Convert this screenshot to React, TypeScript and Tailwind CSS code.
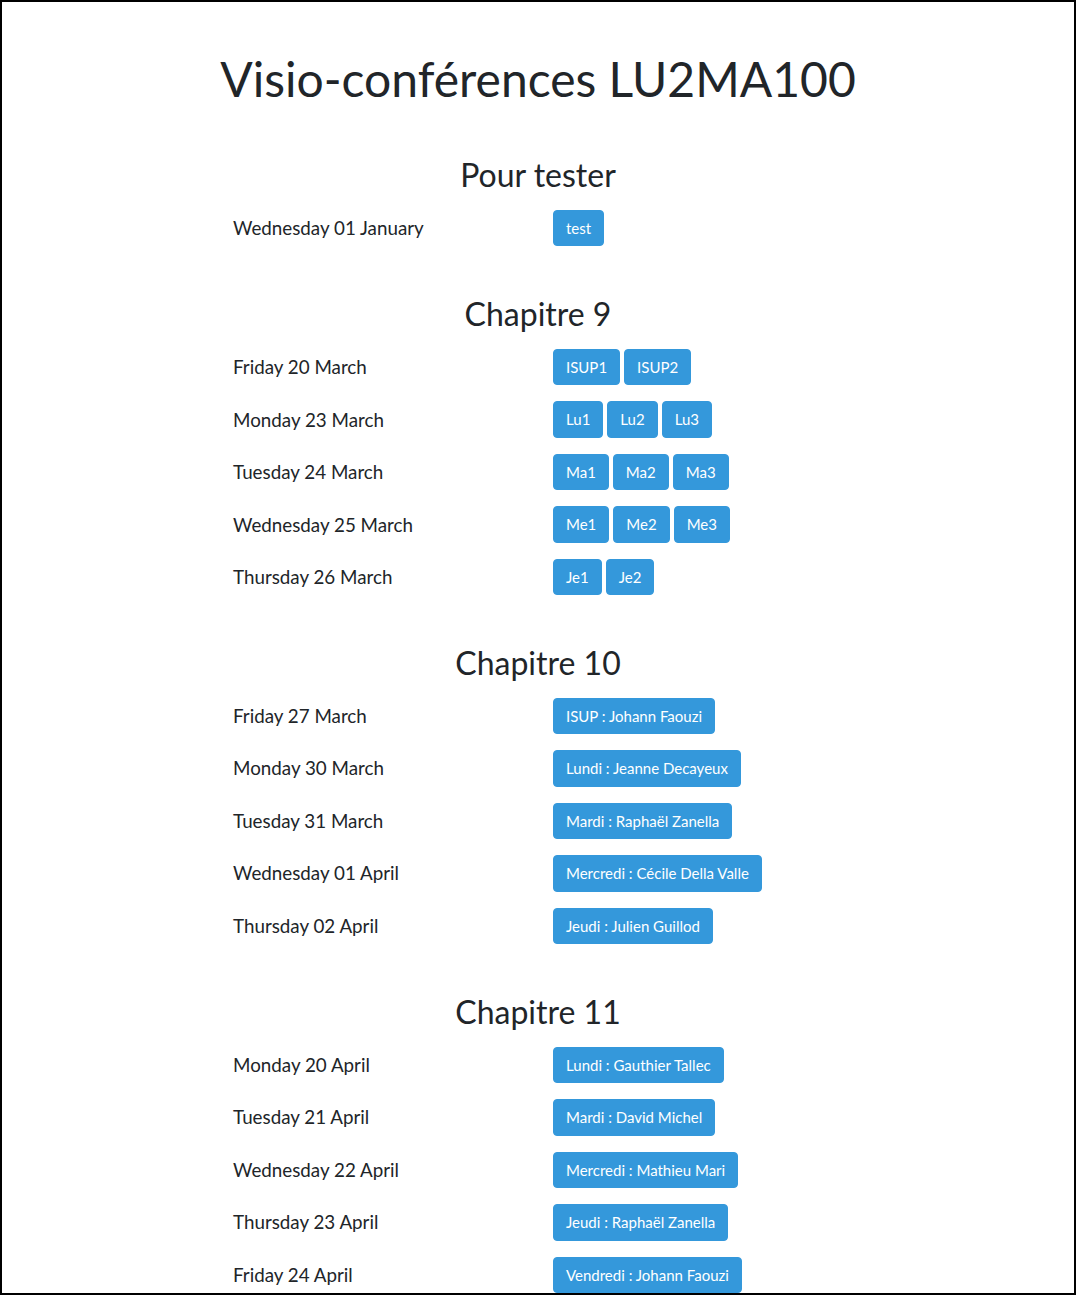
import React from 'react';

type Row = { date: string; links: string[] };
type Section = { title: string; rows: Row[] };

const sections: Section[] = [
  {
    title: 'Pour tester',
    rows: [{ date: 'Wednesday 01 January', links: ['test'] }],
  },
  {
    title: 'Chapitre 9',
    rows: [
      { date: 'Friday 20 March', links: ['ISUP1', 'ISUP2'] },
      { date: 'Monday 23 March', links: ['Lu1', 'Lu2', 'Lu3'] },
      { date: 'Tuesday 24 March', links: ['Ma1', 'Ma2', 'Ma3'] },
      { date: 'Wednesday 25 March', links: ['Me1', 'Me2', 'Me3'] },
      { date: 'Thursday 26 March', links: ['Je1', 'Je2'] },
    ],
  },
  {
    title: 'Chapitre 10',
    rows: [
      { date: 'Friday 27 March', links: ['ISUP : Johann Faouzi'] },
      { date: 'Monday 30 March', links: ['Lundi : Jeanne Decayeux'] },
      { date: 'Tuesday 31 March', links: ['Mardi : Raphaël Zanella'] },
      { date: 'Wednesday 01 April', links: ['Mercredi : Cécile Della Valle'] },
      { date: 'Thursday 02 April', links: ['Jeudi : Julien Guillod'] },
    ],
  },
  {
    title: 'Chapitre 11',
    rows: [
      { date: 'Monday 20 April', links: ['Lundi : Gauthier Tallec'] },
      { date: 'Tuesday 21 April', links: ['Mardi : David Michel'] },
      { date: 'Wednesday 22 April', links: ['Mercredi : Mathieu Mari'] },
      { date: 'Thursday 23 April', links: ['Jeudi : Raphaël Zanella'] },
      { date: 'Friday 24 April', links: ['Vendredi : Johann Faouzi'] },
    ],
  },
];

export default function App() {
  return (
    <div className="h-[1295px] overflow-hidden border-2 border-black bg-white text-[#212529] font-['Lato','Liberation_Sans',sans-serif]">
      <h1 className="pt-[48px] mb-[8px] text-center text-[48px] leading-[1.2] font-normal">
        Visio-conférences LU2MA100
      </h1>

      {sections.map((section) => (
        <section key={section.title} className="pt-[40.5px]">
          <h2 className="mb-[7.5px] text-center text-[32px] leading-[1.2] font-normal">{section.title}</h2>
          <div className="mx-auto w-[610px]">
            {section.rows.map((row) => (
              <div key={row.date} className="grid h-[52.5px] grid-cols-[320px_1fr] items-center">
                <span className="text-[18.8px] leading-[1.5] font-normal">{row.date}</span>
                <div className="flex gap-[4px]">
                  {row.links.map((link) => (
                    <a
                      key={link}
                      href="#"
                      className="rounded-[4px] border border-[#3498db] bg-[#3498db] px-3 py-[6px] text-[15px] leading-[1.5] text-white"
                    >
                      {link}
                    </a>
                  ))}
                </div>
              </div>
            ))}
          </div>
        </section>
      ))}
    </div>
  );
}
